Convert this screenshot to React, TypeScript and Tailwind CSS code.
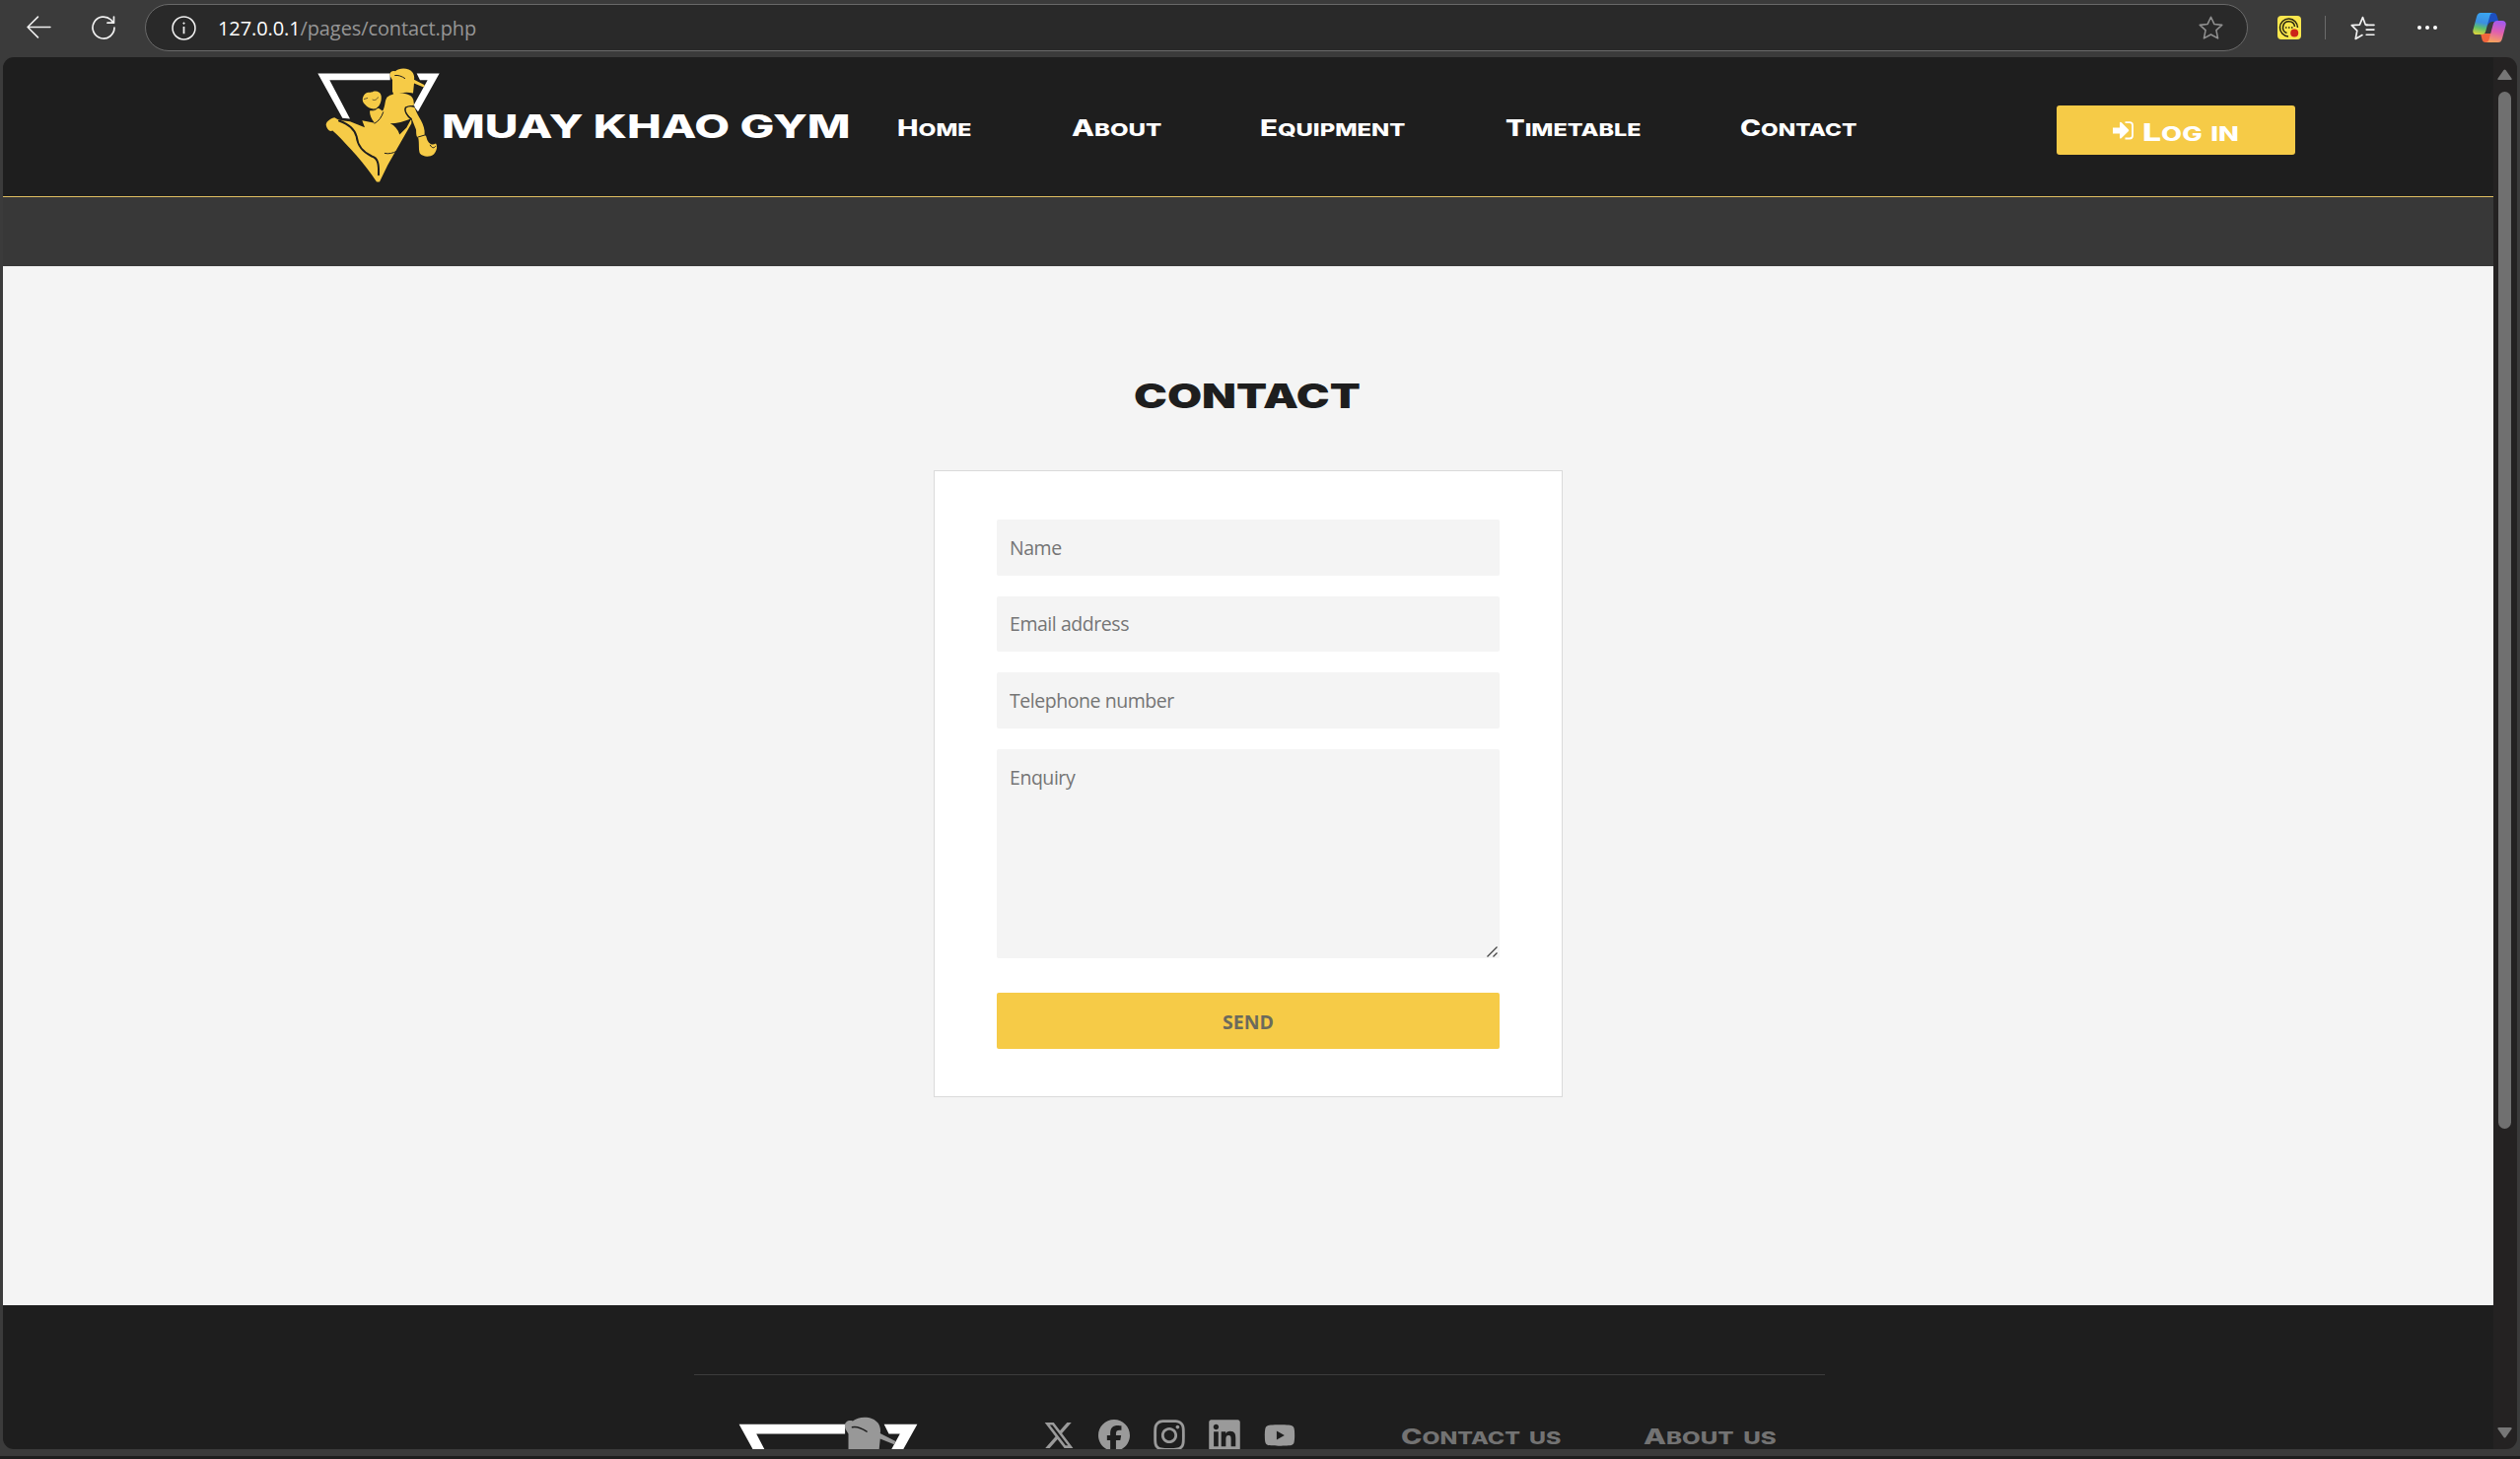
import { useLayoutEffect, useRef, useState } from "react";
import type { ReactNode } from "react";
import { FaFacebook, FaInstagram, FaLinkedin, FaXTwitter, FaYoutube } from "react-icons/fa6";

/* Stretches its text horizontally so that it fills the width given by its class. */
function WideText({ className, children }: { className: string; children: ReactNode }) {
  const outer = useRef<HTMLSpanElement>(null);
  const inner = useRef<HTMLSpanElement>(null);
  const [scale, setScale] = useState(1);
  useLayoutEffect(() => {
    if (outer.current && inner.current) {
      setScale(outer.current.clientWidth / inner.current.offsetWidth);
    }
  }, []);
  return (
    <span ref={outer} className={`block shrink-0 whitespace-nowrap ${className}`}>
      <span
        ref={inner}
        className="inline-block origin-left first-letter:text-[1.24em]"
        style={{ transform: `scaleX(${scale})` }}
      >
        {children}
      </span>
    </span>
  );
}

function Logo({ className, fighter }: { className: string; fighter: string }) {
  return (
    <svg viewBox="36 28 372 350" className={className} fill="none">
      <path d="M37 44H257V64H73L135 182L112 180Z" fill="#fff" />
      <path d="M338 44H407L342 160L328 142L371 64H348Z" fill="#fff" />
      <g fill={fighter}>
        <path d="M258 54C253 42 261 34 273 37C286 26 315 26 326 42C331 50 331 58 330 63L362 79L359 86L330 74L327 104C305 99 285 103 270 112L264 99V64Z" />
        <path d="M180 107C190 97 198 105 206 99C216 96 228 100 230 112C232 128 226 141 216 150C204 155 190 150 180 138C171 130 171 117 180 107Z" />
        <path d="M195 158C205 158 213 151 222 150L234 158C243 146 240 126 248 116C268 100 321 97 328 125L330 140L304 147C298 158 309 174 322 184V196L250 322L225 374H216C182 320 127 263 96 231L82 218C73 223 64 213 62 200C63 188 79 180 88 178C101 188 119 188 135 190L180 208L172 187L210 195C200 182 195 172 195 158Z" />
        <path d="M304 149C315 141 329 143 333 151C341 176 365 198 362 230L367 236C371 257 384 265 396 257C403 267 398 281 390 290C378 300 356 298 348 288C343 278 346 256 343 241C335 235 337 225 336 215L322 180C311 172 302 160 304 149Z" />
      </g>
      <g stroke="#1e1e1e" strokeWidth="3" strokeLinecap="round">
        <path d="M102 188C132 200 148 212 155 236C158 263 176 284 201 296C221 301 223 322 222 352" strokeWidth="6" />
        <path d="M304 148C299 158 309 174 322 184M304 148C314 142 324 143 330 145" strokeWidth="4" />
        <path d="M195 153C202 160 216 155 220 147M210 196C222 190 232 176 236 162" />
        <path d="M204 124C210 127 217 124 220 117M178 122L188 119" strokeWidth="2" />
        <path d="M241 287C253 290 267 286 276 281" />
        <path d="M341 238L364 231M379 262C384 272 391 272 395 266" />
        <path d="M272 50C282 48 293 53 302 59" strokeWidth="3" />
      </g>
      <path d="M257 196C277 196 300 190 322 181L307 209L286 230C281 214 271 202 257 196Z" fill="#1e1e1e" />
    </svg>
  );
}

function StarOutline() {
  return (
    <svg viewBox="0 0 24 24" className="size-[25px]" fill="none" stroke="#8f8f8f" strokeWidth="1.5" strokeLinejoin="round">
      <path d="M12 1.2L15.2 8.1L22.8 9L17.2 14.1L18.8 22L12 18.2L5.2 22L6.8 14.1L1.2 9L8.8 8.1Z" />
    </svg>
  );
}

function CopilotIcon() {
  return (
    <svg viewBox="0 0 34 32" className="ml-[36px] h-[32px] w-[34px]">
      <defs>
        <linearGradient id="cpA" x1="0.5" y1="0" x2="0.3" y2="1">
          <stop offset="0" stopColor="#3aa5f0" />
          <stop offset="0.45" stopColor="#3c8fe0" />
          <stop offset="0.7" stopColor="#5fc06a" />
          <stop offset="1" stopColor="#d8d33c" />
        </linearGradient>
        <linearGradient id="cpB" x1="0.6" y1="0" x2="0.4" y2="1">
          <stop offset="0" stopColor="#a259f0" />
          <stop offset="0.5" stopColor="#e05fb0" />
          <stop offset="1" stopColor="#f7a35c" />
        </linearGradient>
      </defs>
      <path d="M14 1h7c2 0 3 1 3.600 3l1.800 6h-6c-3 0-4 1-5 4Z" fill="#1c4fc0" />
      <path d="M8 22h10l3 1-2 8h-6c-2 0-3-1-3.500-3Z" fill="#f0643c" />
      <path d="M8 1h13c-2 0-3 1-3.600 3l-4 15c-.8 3-2 4-4.400 4H4c-3 0-4.300-2-3.500-5L4 5c1-3 2-4 4-4Z" fill="url(#cpA)" />
      <path d="M26 31H13c2 0 3-1 3.600-3l4-15c.8-3 2-4 4.400-4h5c3 0 4.300 2 3.500 5L30 27c-1 3-2 4-4 4Z" fill="url(#cpB)" />
    </svg>
  );
}

function Toolbar() {
  return (
    <div className="flex h-[58px] items-start pt-1 pl-[27px]">
      <svg viewBox="0 0 24 22" className="mt-[12px] h-[23px] w-[25px]" fill="none" stroke="#f0f0f0" strokeWidth="1.5" strokeLinecap="round" strokeLinejoin="round">
        <path d="M23 11H1M11 1L1 11L11 21" />
      </svg>
      <svg viewBox="0 0 24 24" className="mt-[12px] ml-[41px] size-[24px]" fill="none" stroke="#f0f0f0" strokeWidth="1.7" strokeLinecap="round" strokeLinejoin="round">
        <path d="M23 12A11 11 0 1 1 19.500 4L22 7M22.500 1V7.200H16" />
      </svg>
      <div className="ml-[30px] flex h-12 w-[2133px] items-center rounded-full border border-[#696969] bg-[#292929] pr-[24px] pl-[26px]">
        <svg viewBox="0 0 24 24" className="size-[25px]" fill="none" stroke="#f0f0f0" strokeWidth="1.5">
          <circle cx="12" cy="12" r="11" />
          <path d="M12 10.500V17.500" strokeWidth="1.700" />
          <circle cx="12" cy="7.300" r="0.700" fill="#f0f0f0" strokeWidth="0.800" />
        </svg>
        <p className="mt-px ml-[22px] font-['Open_Sans','Noto_Sans',sans-serif] text-[20px] tracking-[-0.1px] text-[#969696]">
          <span className="text-white">127.0.0.1</span>/pages/contact.php
        </p>
        <span className="ml-auto">
          <StarOutline />
        </span>
      </div>
      <div className="flex h-12 items-center">
        <svg viewBox="0 0 24 24" className="ml-[30px] size-[24px]" fill="none">
          <rect width="24" height="24" rx="4" fill="#f9e64d" />
          <path d="M11 21A9 9 0 1 1 20.500 12M9.500 17.500A6 6 0 1 1 17.500 11" stroke="#27240f" strokeWidth="1.500" />
          <path d="M8 12h1.500M11 12h1.500M14 12h1.500" stroke="#27240f" strokeWidth="1.500" />
          <circle cx="17.200" cy="17.500" r="4" fill="#cc2419" />
        </svg>
        <div className="ml-[24px] h-6 w-px bg-[#6a6a6a]" />
        <svg viewBox="0 0 24 24" className="ml-[25px] size-[25px]" fill="none" stroke="#f4f4f4" strokeWidth="1.600" strokeLinecap="round" strokeLinejoin="round">
          <path d="M16.500 9L14.600 8.700L12 1.500L9 8.700L1.200 9.300L6.500 14.500L5 22.500L11.500 18.800" />
          <path d="M15.500 9H23M15.500 13.500H23M15.500 18.500H23" />
        </svg>
        <div className="ml-[43px] flex gap-[4px]">
          <span className="size-1 rounded-full bg-white" />
          <span className="size-1 rounded-full bg-white" />
          <span className="size-1 rounded-full bg-white" />
        </div>
        <CopilotIcon />
      </div>
    </div>
  );
}

const navItems = [
  { label: "Home", width: "w-[76px]" },
  { label: "About", width: "w-[91px]" },
  { label: "Equipment", width: "w-[148px]" },
  { label: "Timetable", width: "w-[138px]" },
  { label: "Contact", width: "w-[118px]" },
];

function Header() {
  return (
    <header className="flex h-[142px] shrink-0 items-start border-b border-[#e0bf62] bg-[#1e1e1e] pl-[319px]">
      <Logo className="mt-[11px] h-[117px] w-[124px]" fighter="#f6cb47" />
      <WideText className="mt-[50px] ml-[2px] w-[415px] text-[33px] leading-[40px] font-extrabold text-white [&>span]:first-letter:text-[1em]">
        MUAY KHAO GYM
      </WideText>
      <nav className="mt-[57px] ml-[47px] flex gap-[100.5px]">
        {navItems.map((item) => (
          <WideText key={item.label} className={`text-[18px] leading-[30px] font-extrabold text-white uppercase ${item.width}`}>
            {item.label}
          </WideText>
        ))}
      </nav>
      <button className="mt-[49px] ml-[203px] flex h-[50px] w-[242px] items-start rounded-[3px] bg-[#f6cb47] pl-[57px] text-white">
        <svg viewBox="0 0 21 19" className="mt-[16px] h-[19px] w-[21px]">
          <path d="M0 6.500H7V1.500Q7.500 .3 8.800 1.200L16 8.500Q16.500 9.200 16 10L8.800 17Q7.500 18 7 17V12.500H0Z" fill="currentColor" />
          <path d="M12.500 1.200H17Q20 1.200 20 4V14.500Q20 17.500 17 17.500H12.500" fill="none" stroke="currentColor" strokeWidth="1.800" />
        </svg>
        <WideText className="mt-[12px] ml-[9px] w-[98px] text-left text-[20px] leading-[30px] font-extrabold uppercase [word-spacing:2px]">Log in</WideText>
      </button>
    </header>
  );
}

const fieldClass =
  "block w-full rounded-[2px] bg-[#f4f4f4] px-[13px] text-[19.5px] tracking-[-0.45px] text-[#333] outline-none placeholder:text-[#757575]";

function ContactForm() {
  return (
    <form className="mx-auto mt-[51px] h-[636px] w-[638px] border border-[#dadada] bg-white px-[63px] pt-[49px] font-['Open_Sans','Noto_Sans',sans-serif]">
      <input placeholder="Name" className={`h-[57px] ${fieldClass}`} />
      <input placeholder="Email address" className={`mt-[21px] h-[56px] pb-[2px] ${fieldClass}`} />
      <input placeholder="Telephone number" className={`mt-[21px] h-[57px] ${fieldClass}`} />
      <div className="relative mt-[21px]">
        <textarea placeholder="Enquiry" className={`h-[212px] resize-none pt-[15px] leading-[28px] ${fieldClass}`} />
        <svg viewBox="0 0 11 11" className="absolute right-[2px] bottom-[1px] size-[11px]" stroke="#444" strokeWidth="1.300">
          <path d="M0.500 10.500L10.500 0.500M6.500 10.500L10.500 6.500" />
        </svg>
      </div>
      <button className="mt-[35px] flex h-[57px] w-full items-center justify-center rounded-[2px] bg-[#f6cb47] pt-[3px] text-[19.5px] font-bold text-[#6b6a5c]">
        SEND
      </button>
    </form>
  );
}

function Footer() {
  return (
    <footer className="h-[146px] shrink-0 overflow-hidden bg-[#1e1e1e] pt-[70px]">
      <div className="ml-[701px] flex w-[1147px] items-start border-t border-[#3c3c3c] pl-[45px]">
        <Logo className="mt-[42px] h-[171px] w-[182px]" fighter="#989898" />
        <div className="mt-[43px] ml-[127px] flex items-center gap-[24px] text-[#9a9a9a]">
          <FaXTwitter className="size-8" />
          <FaFacebook className="size-8" />
          <FaInstagram className="-mx-0.5 size-9" />
          <FaLinkedin className="-mx-0.5 size-9" />
          <FaYoutube className="size-8" />
        </div>
        <WideText className="mt-[48px] ml-[107px] w-[163px] text-[17px] leading-[30px] font-extrabold text-[#737373] uppercase [word-spacing:3px]">Contact us</WideText>
        <WideText className="mt-[48px] ml-[83px] w-[135px] text-[17px] leading-[30px] font-extrabold text-[#737373] uppercase [word-spacing:3px]">About us</WideText>
      </div>
    </footer>
  );
}

function Scrollbar() {
  return (
    <div className="flex w-[24px] shrink-0 flex-col items-start bg-[#242222] pt-[12px] pb-[11px] pl-[4px]">
      <svg viewBox="0 0 15 11" className="h-[11px] w-[15px]">
        <path d="M6.500 1Q7.500 0 8.500 1L14.500 9.500Q15 11 13.500 11H1.500Q0 11 .5 9.500Z" fill="#767676" />
      </svg>
      <div className="mt-[12px] ml-[1px] h-[1052px] w-[13px] rounded-full bg-[#707070]" />
      <svg viewBox="0 0 15 11" className="mt-auto h-[11px] w-[15px] rotate-180">
        <path d="M6.500 1Q7.500 0 8.500 1L14.500 9.500Q15 11 13.500 11H1.500Q0 11 .5 9.500Z" fill="#767676" />
      </svg>
    </div>
  );
}

export default function App() {
  return (
    <div className="h-[1480px] w-[2556px] overflow-hidden bg-[#3b3b3b] font-[Inter,sans-serif]">
      <Toolbar />
      <div className="mr-[3px] ml-[3px] flex h-[1412px] overflow-hidden rounded-[11px]">
        <div className="flex w-[2526px] flex-col">
          <Header />
          <div className="h-[70px] shrink-0 bg-[#383838]" />
          <main className="h-[1054px] shrink-0 bg-[#f4f4f4] pt-[108px]">
            <h1>
              <WideText className="mx-auto w-[230px] -translate-x-px text-[34.500px] leading-[48px] font-black text-[#1e1e1e] [&>span]:first-letter:text-[1em]">CONTACT</WideText>
            </h1>
            <ContactForm />
          </main>
          <Footer />
        </div>
        <Scrollbar />
      </div>
      <div className="mt-[7px] h-[3px] bg-[#1e1e1e]" />
    </div>
  );
}
